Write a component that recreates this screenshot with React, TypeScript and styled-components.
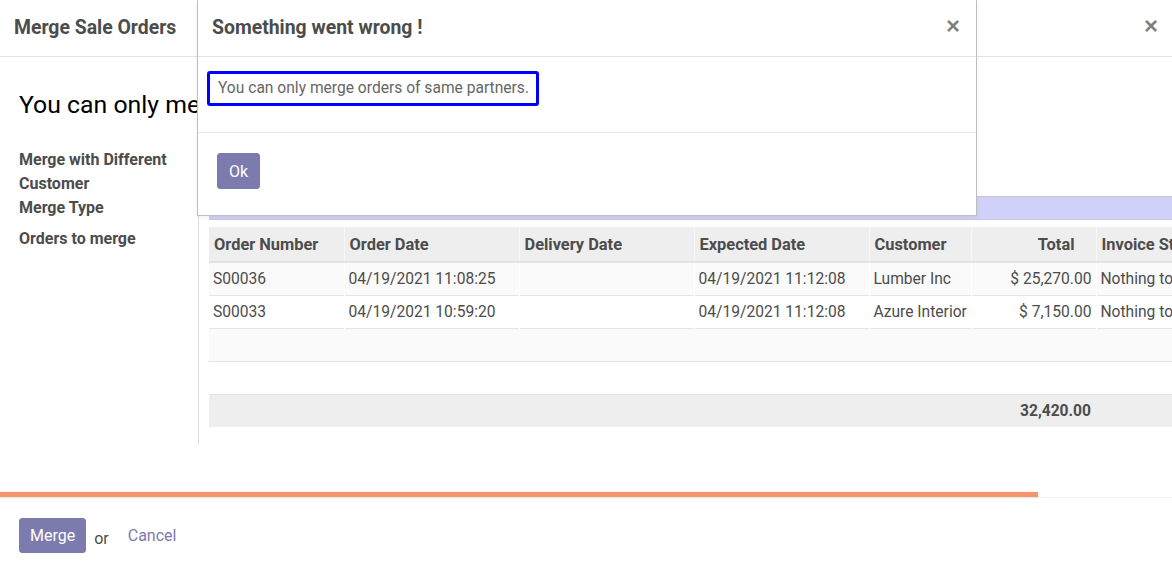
import React from "react";
import styled, { createGlobalStyle } from "styled-components";

const GlobalStyle = createGlobalStyle`
  html, body { margin: 0; padding: 0; background: #fff; }
  body { font-family: Roboto, "Liberation Sans", Arial, sans-serif; color: #4c4c4c; }
  * { box-sizing: border-box; }
`;

const Page = styled.div`
  position: relative;
  width: 1172px;
  height: 578px;
  overflow: hidden;
  display: flex;
  flex-direction: column;
  background: #fff;
`;

const Header = styled.header`
  flex: none;
  height: 57px;
  display: flex;
  align-items: center;
  justify-content: space-between;
  padding: 0 14px 1px 14px;
  border-bottom: 1px solid #e2e2e2;
`;

const Title = styled.h4`
  margin: 0;
  font-size: 19.4px;
  font-weight: 700;
  color: #4c4c4c;
`;

const Close = styled.button`
  border: 0;
  background: none;
  padding: 0 0 3px;
  font-family: "Liberation Sans", Arial, sans-serif;
  font-size: 24px;
  font-weight: 700;
  line-height: 1;
  color: rgba(0, 0, 0, 0.5);
  cursor: pointer;
`;

const Body = styled.main`
  flex: 1;
  padding: 33px 0 0 19px;
  overflow: hidden;
`;

const Lead = styled.p`
  margin: 0;
  font-size: 24.8px;
  line-height: 29px;
  color: #000;
  white-space: nowrap;
`;

const Form = styled.div`
  display: grid;
  grid-template-columns: 179px 1fr;
  margin-top: 29px;
`;

const Label = styled.div<{ $gap?: number }>`
  font-size: 16px;
  font-weight: 700;
  line-height: 24px;
  color: #4c4c4c;
  padding-right: 8px;
  padding-top: ${(p) => p.$gap ?? 0}px;
`;

const Field = styled.div<{ $gap?: number; $bottom?: number }>`
  border-left: 1px solid #dcdcdc;
  padding-left: 10px;
  padding-top: ${(p) => p.$gap ?? 0}px;
  padding-bottom: ${(p) => p.$bottom ?? 0}px;
  min-width: 0;
`;

const SelectBar = styled.div`
  height: 24px;
  background: #d0d0f9;
  border-top: 1px solid #c4c4d8;
  border-bottom: 1px solid #c6c6ee;
`;

const Table = styled.table`
  border-collapse: collapse;
  table-layout: fixed;
  width: 1040px;
  font-size: 15.6px;
  color: #4c4c4c;
`;

const Th = styled.th<{ $right?: boolean }>`
  height: 35px;
  padding: 0 ${(p) => (p.$right ? 21 : 5)}px 0 5px;
  background: #eeeeee;
  font-size: 16.4px;
  font-weight: 700;
  text-align: ${(p) => (p.$right ? "right" : "left")};
  border-left: 1px solid #f6f6f6;
  border-bottom: 2px solid #e2e2e2;
  white-space: nowrap;
  overflow: hidden;
  &:first-child { border-left: 0; }
`;

const Tr = styled.tr<{ $striped?: boolean }>`
  background: ${(p) => (p.$striped ? "#fafafa" : "#fff")};
  border-bottom: 1px solid #e6e6e6;
`;

const Td = styled.td<{ $right?: boolean }>`
  height: 33px;
  padding: 0 4px;
  text-align: ${(p) => (p.$right ? "right" : "left")};
  border-left: 1px solid #ffffff;
  white-space: nowrap;
  overflow: hidden;
  &:first-child { border-left: 0; }
`;

const FootTd = styled.td<{ $right?: boolean }>`
  height: 33px;
  padding: 0 5px;
  background: #eeeeee;
  font-weight: 700;
  text-align: ${(p) => (p.$right ? "right" : "left")};
`;

const Footer = styled.footer`
  flex: none;
  height: 86px;
  display: flex;
  flex-direction: column;
`;

const Progress = styled.div`
  height: 6px;
  border-bottom: 1px solid #efefef;
`;

const ProgressFill = styled.div`
  height: 5px;
  background: #f6946c;
  box-shadow: 0 0 1px rgba(246, 148, 108, 0.6);
`;

const Actions = styled.div`
  display: flex;
  align-items: center;
  padding: 20px 19px 0;
`;

const PrimaryButton = styled.button<{ $h?: number; $px?: number }>`
  height: ${(p) => p.$h ?? 35}px;
  padding: 0 ${(p) => p.$px ?? 10}px;
  border: 1px solid #7c7bad;
  border-radius: 3px;
  background: #7c7bad;
  color: #fff;
  font-family: Roboto, "Liberation Sans", Arial, sans-serif;
  font-size: 16px;
  cursor: pointer;
`;

const Or = styled.span`
  margin: 6px 0 0 8px;
  font-size: 16px;
  color: #4c4c4c;
`;

const LinkButton = styled.button`
  border: 0;
  background: none;
  padding: 0 0 0 19px;
  font-family: Roboto, "Liberation Sans", Arial, sans-serif;
  font-size: 16px;
  color: #7c7bad;
  cursor: pointer;
`;

const Dialog = styled.div`
  position: absolute;
  left: 197px;
  top: 0;
  width: 780px;
  background: #fff;
  border: 1px solid rgba(0, 0, 0, 0.25);
  border-top: 0;
  box-shadow: 0 2px 4px rgba(0, 0, 0, 0.06);
  display: flex;
  flex-direction: column;
`;

const DialogHeader = styled(Header)`
  padding: 0 16px 1px 14px;
`;

const DialogBody = styled.div`
  padding: 14px 10px 26px 9px;
  border-bottom: 1px solid #e9e9e9;
`;

const Message = styled.div`
  display: inline-block;
  padding: 3px 7px 3px 8px;
  border: 3px solid #0000ff;
  border-radius: 3px;
  font-size: 15.6px;
  line-height: 23px;
  color: #666;
`;

const DialogFooter = styled.div`
  padding: 20px 19px 26px;
`;

const columns = [
  { label: "Order Number", w: 135 },
  { label: "Order Date", w: 175 },
  { label: "Delivery Date", w: 175 },
  { label: "Expected Date", w: 175 },
  { label: "Customer", w: 102 },
  { label: "Total", w: 125, right: true },
  { label: "Invoice Status", w: 153 },
];

const rows = [
  ["S00036", "04/19/2021 11:08:25", "", "04/19/2021 11:12:08", "Lumber Inc", "$ 25,270.00", "Nothing to Invoice"],
  ["S00033", "04/19/2021 10:59:20", "", "04/19/2021 11:12:08", "Azure Interior", "$ 7,150.00", "Nothing to Invoice"],
];

export default function App() {
  return (
    <>
      <GlobalStyle />
      <Page>
        <Header>
          <Title>Merge Sale Orders</Title>
          <Close aria-label="Close">×</Close>
        </Header>
        <Body>
          <Lead>You can only merge orders of same partners.</Lead>
          <Form>
            <Label>Merge with Different Customer</Label>
            <Field />
            <Label>Merge Type</Label>
            <Field>
              <SelectBar />
            </Field>
            <Label $gap={7}>Orders to merge</Label>
            <Field $gap={7} $bottom={17}>
              <Table>
                <colgroup>
                  {columns.map((c) => (
                    <col key={c.label} style={{ width: c.w }} />
                  ))}
                </colgroup>
                <thead>
                  <tr>
                    {columns.map((c) => (
                      <Th key={c.label} $right={c.right}>
                        {c.label}
                      </Th>
                    ))}
                  </tr>
                </thead>
                <tbody>
                  {rows.map((r, i) => (
                    <Tr key={r[0]} $striped={i % 2 === 0}>
                      {r.map((v, j) => (
                        <Td key={j} $right={columns[j].right}>
                          {v}
                        </Td>
                      ))}
                    </Tr>
                  ))}
                  <Tr $striped>
                    <Td colSpan={columns.length} />
                  </Tr>
                  <Tr>
                    <Td colSpan={columns.length} />
                  </Tr>
                </tbody>
                <tfoot>
                  <tr>
                    {columns.map((c) => (
                      <FootTd key={c.label} $right={c.right}>
                        {c.label === "Total" ? "32,420.00" : ""}
                      </FootTd>
                    ))}
                  </tr>
                </tfoot>
              </Table>
            </Field>
          </Form>
        </Body>
        <Footer>
          <Progress>
            <ProgressFill style={{ width: "1038px" }} />
          </Progress>
          <Actions>
            <PrimaryButton>Merge</PrimaryButton>
            <Or>or</Or>
            <LinkButton>Cancel</LinkButton>
          </Actions>
        </Footer>

        <Dialog role="alertdialog">
          <DialogHeader>
            <Title>Something went wrong !</Title>
            <Close aria-label="Close">×</Close>
          </DialogHeader>
          <DialogBody>
            <Message>You can only merge orders of same partners.</Message>
          </DialogBody>
          <DialogFooter>
            <PrimaryButton $h={36} $px={11}>
              Ok
            </PrimaryButton>
          </DialogFooter>
        </Dialog>
      </Page>
    </>
  );
}
